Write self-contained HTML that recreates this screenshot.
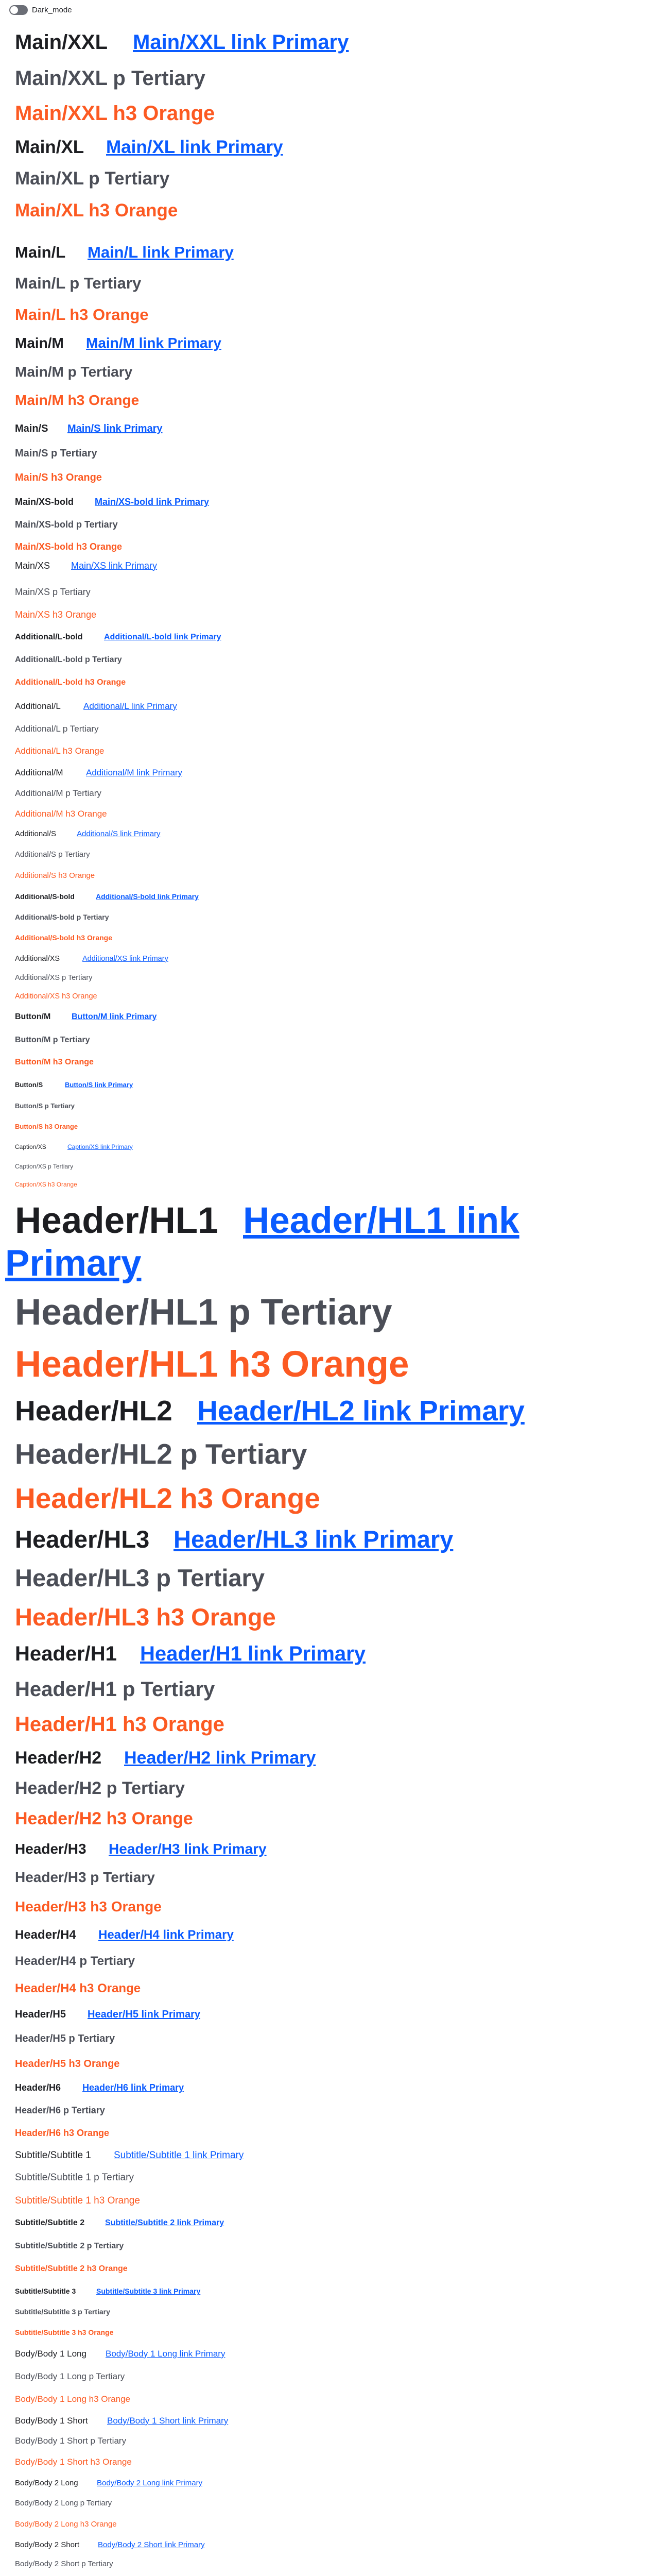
<!DOCTYPE html>
<html><head><meta charset="utf-8"><style>
html,body{margin:0;padding:0;background:#fff;}
body{width:1280px;height:5406px;position:relative;overflow:hidden;font-family:"Liberation Sans",Arial,sans-serif;}
.t{position:absolute;left:29px;line-height:1;white-space:nowrap;top:calc(var(--b)*1px - 0.846em);}
.k{color:#1d1e22}.p{color:#4b4e57}.o{color:#fc5a22}
.l{color:#0a5bff;text-decoration:underline;}
.b{font-weight:bold}
.tog{position:absolute;left:18px;top:10px;width:36px;height:19px;border-radius:10px;background:#6b6e76;}
.tog:after{content:"";position:absolute;left:2px;top:2px;width:15px;height:15px;border-radius:50%;background:#fff;}
</style></head><body>
<div class="tog"></div>
<div class="t k" style="--b:25;font-size:15px;left:62px">Dark_mode</div>

<div class="t k b" style="--b:96;font-size:40px">Main/XXL</div><div class="t l b" style="--b:96;font-size:40px;left:258px">Main/XXL link Primary</div>
<div class="t p b" style="--b:166;font-size:40px">Main/XXL p Tertiary</div>
<div class="t o b" style="--b:234;font-size:40px">Main/XXL h3 Orange</div>

<div class="t k b" style="--b:298;font-size:35px">Main/XL</div><div class="t l b" style="--b:298;font-size:35px;left:206px">Main/XL link Primary</div>
<div class="t p b" style="--b:359;font-size:35px">Main/XL p Tertiary</div>
<div class="t o b" style="--b:421;font-size:35px">Main/XL h3 Orange</div>

<div class="t k b" style="--b:500;font-size:31px">Main/L</div><div class="t l b" style="--b:500;font-size:31px;left:170px">Main/L link Primary</div>
<div class="t p b" style="--b:560;font-size:31px">Main/L p Tertiary</div>
<div class="t o b" style="--b:621;font-size:31px">Main/L h3 Orange</div>

<div class="t k b" style="--b:676;font-size:28px">Main/M</div><div class="t l b" style="--b:676;font-size:28px;left:167px">Main/M link Primary</div>
<div class="t p b" style="--b:732;font-size:28px">Main/M p Tertiary</div>
<div class="t o b" style="--b:787;font-size:28px">Main/M h3 Orange</div>

<div class="t k b" style="--b:839;font-size:20px">Main/S</div><div class="t l b" style="--b:839;font-size:20px;left:131px">Main/S link Primary</div>
<div class="t p b" style="--b:887;font-size:20px">Main/S p Tertiary</div>
<div class="t o b" style="--b:934;font-size:20px">Main/S h3 Orange</div>

<div class="t k b" style="--b:980;font-size:18px">Main/XS-bold</div><div class="t l b" style="--b:980;font-size:18px;left:184px">Main/XS-bold link Primary</div>
<div class="t p b" style="--b:1024;font-size:18px">Main/XS-bold p Tertiary</div>
<div class="t o b" style="--b:1067;font-size:18px">Main/XS-bold h3 Orange</div>

<div class="t k" style="--b:1104;font-size:18px">Main/XS</div><div class="t l" style="--b:1104;font-size:18px;left:138px">Main/XS link Primary</div>
<div class="t p" style="--b:1155;font-size:18px">Main/XS p Tertiary</div>
<div class="t o" style="--b:1199;font-size:18px">Main/XS h3 Orange</div>

<div class="t k b" style="--b:1243;font-size:16px">Additional/L-bold</div><div class="t l b" style="--b:1243;font-size:16px;left:202px">Additional/L-bold link Primary</div>
<div class="t p b" style="--b:1287;font-size:16px">Additional/L-bold p Tertiary</div>
<div class="t o b" style="--b:1331;font-size:16px">Additional/L-bold h3 Orange</div>

<div class="t k" style="--b:1376;font-size:17px">Additional/L</div><div class="t l" style="--b:1376;font-size:17px;left:162px">Additional/L link Primary</div>
<div class="t p" style="--b:1420;font-size:17px">Additional/L p Tertiary</div>
<div class="t o" style="--b:1463;font-size:17px">Additional/L h3 Orange</div>

<div class="t k" style="--b:1505;font-size:17px">Additional/M</div><div class="t l" style="--b:1505;font-size:17px;left:167px">Additional/M link Primary</div>
<div class="t p" style="--b:1545;font-size:17px">Additional/M p Tertiary</div>
<div class="t o" style="--b:1585;font-size:17px">Additional/M h3 Orange</div>

<div class="t k" style="--b:1624;font-size:15px">Additional/S</div><div class="t l" style="--b:1624;font-size:15px;left:149px">Additional/S link Primary</div>
<div class="t p" style="--b:1664;font-size:15px">Additional/S p Tertiary</div>
<div class="t o" style="--b:1705;font-size:15px">Additional/S h3 Orange</div>

<div class="t k b" style="--b:1745;font-size:14px">Additional/S-bold</div><div class="t l b" style="--b:1745;font-size:14px;left:186px">Additional/S-bold link Primary</div>
<div class="t p b" style="--b:1785;font-size:14px">Additional/S-bold p Tertiary</div>
<div class="t o b" style="--b:1825;font-size:14px">Additional/S-bold h3 Orange</div>

<div class="t k" style="--b:1866;font-size:14.5px">Additional/XS</div><div class="t l" style="--b:1866;font-size:14.5px;left:160px">Additional/XS link Primary</div>
<div class="t p" style="--b:1903;font-size:14.5px">Additional/XS p Tertiary</div>
<div class="t o" style="--b:1939;font-size:14.5px">Additional/XS h3 Orange</div>

<div class="t k b" style="--b:1980;font-size:16px">Button/M</div><div class="t l b" style="--b:1980;font-size:16px;left:139px">Button/M link Primary</div>
<div class="t p b" style="--b:2025;font-size:16px">Button/M p Tertiary</div>
<div class="t o b" style="--b:2068;font-size:16px">Button/M h3 Orange</div>

<div class="t k b" style="--b:2110;font-size:13px">Button/S</div><div class="t l b" style="--b:2110;font-size:13px;left:126px">Button/S link Primary</div>
<div class="t p b" style="--b:2151;font-size:13px">Button/S p Tertiary</div>
<div class="t o b" style="--b:2191;font-size:13px">Button/S h3 Orange</div>

<div class="t k" style="--b:2230;font-size:12px">Caption/XS</div><div class="t l" style="--b:2230;font-size:12px;left:131px">Caption/XS link Primary</div>
<div class="t p" style="--b:2268;font-size:12px">Caption/XS p Tertiary</div>
<div class="t o" style="--b:2303;font-size:12px">Caption/XS h3 Orange</div>

<div class="t k b" style="--b:2394;font-size:71px">Header/HL1</div><div class="t l b" style="--b:2394;font-size:71px;left:472px">Header/HL1 link</div>
<div class="t l b" style="--b:2477;font-size:71px;left:10px">Primary</div>
<div class="t p b" style="--b:2572;font-size:71px">Header/HL1 p Tertiary</div>
<div class="t o b" style="--b:2673;font-size:71px">Header/HL1 h3 Orange</div>

<div class="t k b" style="--b:2758;font-size:55px">Header/HL2</div><div class="t l b" style="--b:2758;font-size:55px;left:383px">Header/HL2 link Primary</div>
<div class="t p b" style="--b:2842;font-size:55px">Header/HL2 p Tertiary</div>
<div class="t o b" style="--b:2928;font-size:55px">Header/HL2 h3 Orange</div>

<div class="t k b" style="--b:3004;font-size:47px">Header/HL3</div><div class="t l b" style="--b:3004;font-size:47px;left:337px">Header/HL3 link Primary</div>
<div class="t p b" style="--b:3079;font-size:47px">Header/HL3 p Tertiary</div>
<div class="t o b" style="--b:3155;font-size:47px">Header/HL3 h3 Orange</div>

<div class="t k b" style="--b:3224;font-size:40px">Header/H1</div><div class="t l b" style="--b:3224;font-size:40px;left:272px">Header/H1 link Primary</div>
<div class="t p b" style="--b:3293;font-size:40px">Header/H1 p Tertiary</div>
<div class="t o b" style="--b:3361;font-size:40px">Header/H1 h3 Orange</div>

<div class="t k b" style="--b:3424;font-size:34px">Header/H2</div><div class="t l b" style="--b:3424;font-size:34px;left:241px">Header/H2 link Primary</div>
<div class="t p b" style="--b:3483;font-size:34px">Header/H2 p Tertiary</div>
<div class="t o b" style="--b:3542;font-size:34px">Header/H2 h3 Orange</div>

<div class="t k b" style="--b:3599;font-size:28px">Header/H3</div><div class="t l b" style="--b:3599;font-size:28px;left:211px">Header/H3 link Primary</div>
<div class="t p b" style="--b:3654;font-size:28px">Header/H3 p Tertiary</div>
<div class="t o b" style="--b:3711;font-size:28px">Header/H3 h3 Orange</div>

<div class="t k b" style="--b:3764;font-size:24px">Header/H4</div><div class="t l b" style="--b:3764;font-size:24px;left:191px">Header/H4 link Primary</div>
<div class="t p b" style="--b:3815;font-size:24px">Header/H4 p Tertiary</div>
<div class="t o b" style="--b:3868;font-size:24px">Header/H4 h3 Orange</div>

<div class="t k b" style="--b:3917;font-size:20px">Header/H5</div><div class="t l b" style="--b:3917;font-size:20px;left:170px">Header/H5 link Primary</div>
<div class="t p b" style="--b:3964;font-size:20px">Header/H5 p Tertiary</div>
<div class="t o b" style="--b:4013;font-size:20px">Header/H5 h3 Orange</div>

<div class="t k b" style="--b:4058;font-size:18px">Header/H6</div><div class="t l b" style="--b:4058;font-size:18px;left:160px">Header/H6 link Primary</div>
<div class="t p b" style="--b:4102;font-size:18px">Header/H6 p Tertiary</div>
<div class="t o b" style="--b:4146;font-size:18px">Header/H6 h3 Orange</div>

<div class="t k" style="--b:4190;font-size:19px">Subtitle/Subtitle 1</div><div class="t l" style="--b:4190;font-size:19px;left:221px">Subtitle/Subtitle 1 link Primary</div>
<div class="t p" style="--b:4233;font-size:19px">Subtitle/Subtitle 1 p Tertiary</div>
<div class="t o" style="--b:4278;font-size:19px">Subtitle/Subtitle 1 h3 Orange</div>

<div class="t k b" style="--b:4321;font-size:16px">Subtitle/Subtitle 2</div><div class="t l b" style="--b:4321;font-size:16px;left:204px">Subtitle/Subtitle 2 link Primary</div>
<div class="t p b" style="--b:4366;font-size:16px">Subtitle/Subtitle 2 p Tertiary</div>
<div class="t o b" style="--b:4410;font-size:16px">Subtitle/Subtitle 2 h3 Orange</div>

<div class="t k b" style="--b:4452;font-size:14px">Subtitle/Subtitle 3</div><div class="t l b" style="--b:4452;font-size:14px;left:187px">Subtitle/Subtitle 3 link Primary</div>
<div class="t p b" style="--b:4492;font-size:14px">Subtitle/Subtitle 3 p Tertiary</div>
<div class="t o b" style="--b:4532;font-size:14px">Subtitle/Subtitle 3 h3 Orange</div>

<div class="t k" style="--b:4574;font-size:17px">Body/Body 1 Long</div><div class="t l" style="--b:4574;font-size:17px;left:205px">Body/Body 1 Long link Primary</div>
<div class="t p" style="--b:4618;font-size:17px">Body/Body 1 Long p Tertiary</div>
<div class="t o" style="--b:4662;font-size:17px">Body/Body 1 Long h3 Orange</div>

<div class="t k" style="--b:4704;font-size:17px">Body/Body 1 Short</div><div class="t l" style="--b:4704;font-size:17px;left:208px">Body/Body 1 Short link Primary</div>
<div class="t p" style="--b:4743;font-size:17px">Body/Body 1 Short p Tertiary</div>
<div class="t o" style="--b:4784;font-size:17px">Body/Body 1 Short h3 Orange</div>

<div class="t k" style="--b:4825;font-size:15px">Body/Body 2 Long</div><div class="t l" style="--b:4825;font-size:15px;left:188px">Body/Body 2 Long link Primary</div>
<div class="t p" style="--b:4864;font-size:15px">Body/Body 2 Long p Tertiary</div>
<div class="t o" style="--b:4905;font-size:15px">Body/Body 2 Long h3 Orange</div>

<div class="t k" style="--b:4945;font-size:15px">Body/Body 2 Short</div><div class="t l" style="--b:4945;font-size:15px;left:190px">Body/Body 2 Short link Primary</div>
<div class="t p" style="--b:4982;font-size:15px">Body/Body 2 Short p Tertiary</div>
<div class="t o" style="--b:5018;font-size:15px">Body/Body 2 Short h3 Orange</div>

<div class="t k b" style="--b:5059;font-size:16px">Button/Button 1</div><div class="t l b" style="--b:5059;font-size:16px;left:189px">Button/Button 1 link Primary</div>
<div class="t p b" style="--b:5103;font-size:16px">Button/Button 1 p Tertiary</div>
<div class="t o b" style="--b:5147;font-size:16px">Button/Button 1 h3 Orange</div>

<div class="t k b" style="--b:5189;font-size:14px">Button/Button 2</div><div class="t l b" style="--b:5189;font-size:14px;left:174px">Button/Button 2 link Primary</div>
<div class="t p b" style="--b:5229;font-size:14px">Button/Button 2 p Tertiary</div>
<div class="t o b" style="--b:5269;font-size:14px">Button/Button 2 h3 Orange</div>

<div class="t k" style="--b:5310;font-size:13px">Caption/Caption 1</div><div class="t l" style="--b:5310;font-size:13px;left:171px">Caption/Caption 1 link Primary</div>
<div class="t p" style="--b:5348;font-size:13px">Caption/Caption 1 p Tertiary</div>
<div class="t o" style="--b:5383;font-size:13px">Caption/Caption 1 h3 Orange</div>
</body></html>
